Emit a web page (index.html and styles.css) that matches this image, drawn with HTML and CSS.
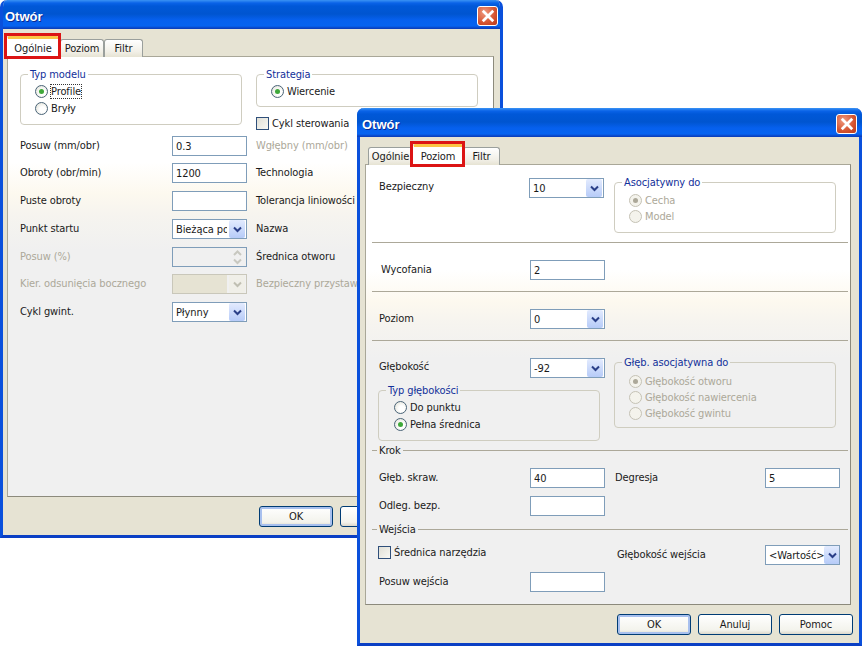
FILE: index.html
```html
<!DOCTYPE html>
<html lang="pl">
<head>
<meta charset="utf-8">
<title>Otwór</title>
<link rel="stylesheet" href="styles.css">
</head>
<body>
<section class="win win-a">
  <header class="title"><span class="title-text">Otwór</span><span class="close"><svg viewBox="0 0 12 12"><path d="M1.5 1.5 10.5 10.5M10.5 1.5 1.5 10.5"/></svg></span></header>
  <div class="tabs tabs-a">
    <span class="tab active marked w-og">Ogólnie</span>
    <span class="tab w-po">Poziom</span>
    <span class="tab w-fi">Filtr</span>
  </div>
  <div class="panel panel-a">
    <div class="top-a">
      <div class="group g-model">
        <span class="legend">Typ modelu</span>
        <label class="radio"><i class="dot on"></i><span class="focus">Profile</span></label>
        <label class="radio"><i class="dot"></i><span>Bryły</span></label>
      </div>
      <div class="top-right">
        <div class="group g-strat">
          <span class="legend">Strategia</span>
          <label class="radio"><i class="dot on"></i><span>Wiercenie</span></label>
        </div>
        <label class="check"><i class="box"></i><span>Cykl sterowania</span></label>
      </div>
    </div>
    <div class="form-a">
      <span class="lbl">Posuw (mm/obr)</span><div class="field"><span class="val">0.3</span></div><span class="lbl off">Wgłębny (mm/obr)</span>
      <span class="lbl">Obroty (obr/min)</span><div class="field"><span class="val">1200</span></div><span class="lbl">Technologia</span>
      <span class="lbl">Puste obroty</span><div class="field"></div><span class="lbl">Tolerancja liniowości</span>
      <span class="lbl">Punkt startu</span><div class="field combo"><span class="val clip">Bieżąca pozycja</span><span class="arrow"><svg viewBox="0 0 9 7"><path d="M1 1.5 4.5 5 8 1.5"/></svg></span></div><span class="lbl">Nazwa</span>
      <span class="lbl off">Posuw (%)</span><div class="field spin-field"><span class="spin"><svg viewBox="0 0 9 7"><path d="M1 5 4.5 1.5 8 5"/></svg><svg viewBox="0 0 9 7"><path d="M1 1.5 4.5 5 8 1.5"/></svg></span></div><span class="lbl">Średnica otworu</span>
      <span class="lbl off">Kier. odsunięcia bocznego</span><div class="field combo disabled"><span class="arrow"><svg viewBox="0 0 9 7"><path d="M1 1.5 4.5 5 8 1.5"/></svg></span></div><span class="lbl off">Bezpieczny przystaw</span>
      <span class="lbl">Cykl gwint.</span><div class="field combo"><span class="val">Płynny</span><span class="arrow"><svg viewBox="0 0 9 7"><path d="M1 1.5 4.5 5 8 1.5"/></svg></span></div>
    </div>
  </div>
  <footer class="actions actions-a">
    <span class="btn default">OK</span>
    <span class="btn"></span>
  </footer>
</section>

<section class="win win-b">
  <header class="title"><span class="title-text">Otwór</span><span class="close"><svg viewBox="0 0 12 12"><path d="M1.5 1.5 10.5 10.5M10.5 1.5 1.5 10.5"/></svg></span></header>
  <div class="tabs tabs-b">
    <span class="tab w-og2">Ogólnie</span>
    <span class="tab active marked w-po2">Poziom</span>
    <span class="tab w-fi2">Filtr</span>
  </div>
  <div class="panel panel-b">
    <div class="sec sec-1">
      <span class="lbl sec-lbl">Bezpieczny</span>
      <div class="field combo shift-0"><span class="val">10</span><span class="arrow"><svg viewBox="0 0 9 7"><path d="M1 1.5 4.5 5 8 1.5"/></svg></span></div>
      <div class="group g-asoc">
        <span class="legend">Asocjatywny do</span>
        <label class="radio off"><i class="dot on"></i><span>Cecha</span></label>
        <label class="radio off"><i class="dot"></i><span>Model</span></label>
      </div>
    </div>
    <div class="sec sec-2">
      <span class="lbl sec-lbl nudge">Wycofania</span>
      <div class="field"><span class="val">2</span></div>
    </div>
    <div class="sec sec-3">
      <span class="lbl sec-lbl">Poziom</span>
      <div class="field combo"><span class="val">0</span><span class="arrow"><svg viewBox="0 0 9 7"><path d="M1 1.5 4.5 5 8 1.5"/></svg></span></div>
    </div>
    <div class="sec sec-4">
      <div class="depth-left">
        <div class="depth-row">
          <span class="lbl sec-lbl">Głębokość</span>
          <div class="field combo"><span class="val">-92</span><span class="arrow"><svg viewBox="0 0 9 7"><path d="M1 1.5 4.5 5 8 1.5"/></svg></span></div>
        </div>
        <div class="group g-typ">
          <span class="legend">Typ głębokości</span>
          <label class="radio"><i class="dot"></i><span>Do punktu</span></label>
          <label class="radio"><i class="dot on"></i><span>Pełna średnica</span></label>
        </div>
      </div>
      <div class="group g-gleb">
        <span class="legend">Głęb. asocjatywna do</span>
        <label class="radio off"><i class="dot on"></i><span>Głębokość otworu</span></label>
        <label class="radio off"><i class="dot"></i><span>Głębokość nawiercenia</span></label>
        <label class="radio off"><i class="dot"></i><span>Głębokość gwintu</span></label>
      </div>
    </div>
    <div class="sep"><span>Krok</span></div>
    <div class="rows rows-krok">
      <span class="lbl">Głęb. skraw.</span><div class="field"><span class="val">40</span></div><span class="lbl">Degresja</span><div class="field"><span class="val">5</span></div>
      <span class="lbl">Odleg. bezp.</span><div class="field"></div>
    </div>
    <div class="sep sep-w"><span>Wejścia</span></div>
    <div class="rows rows-wej">
      <label class="check"><i class="box"></i><span>Średnica narzędzia</span></label><span></span><span class="lbl">Głębokość wejścia</span><div class="field combo"><span class="val tight">&lt;Wartość&gt;</span><span class="arrow"><svg viewBox="0 0 9 7"><path d="M1 1.5 4.5 5 8 1.5"/></svg></span></div>
      <span class="lbl">Posuw wejścia</span><div class="field"></div>
    </div>
  </div>
  <footer class="actions actions-b">
    <span class="btn default">OK</span>
    <span class="btn">Anuluj</span>
    <span class="btn">Pomoc</span>
  </footer>
</section>
</body>
</html>
```

FILE: styles.css
```css
* { box-sizing: border-box; }
html, body { margin: 0; padding: 0; background: #fff; }
body { width: 863px; height: 648px; position: relative; overflow: hidden; font: 11px "DejaVu Sans Condensed", "DejaVu Sans", sans-serif; font-stretch: condensed; letter-spacing: -0.1px; color: #1a1a1a; }

.win { position: absolute; height: 538px; background: #e6e3d3; border: 3px solid #0a50dc; border-top: 0; border-bottom-color: #0a3fc4; border-radius: 7px 7px 0 0; display: flex; flex-direction: column; }
.win-a { left: 0; top: 0; width: 503px; z-index: 1; overflow: hidden; }
.win-b { left: 357px; top: 108px; width: 505px; z-index: 2; }

.title { flex: none; height: 29px; margin: 0 -3px; padding: 0 5px; display: flex; align-items: center; justify-content: space-between; border-radius: 7px 7px 0 0;
  background: linear-gradient(#3a93f4 0, #0a63e8 3px, #0058d8 6px, #0055d0 14px, #0660ee 20px, #0663f0 26px, #0a44c4 28px, #0a3cb8 29px); }
.title-text { font: bold 13px "Liberation Sans", Arial, sans-serif; letter-spacing: 0; color: #fff; text-shadow: 1px 1px 0 #0a2a90; padding-top: 3px; }
.close { width: 21px; height: 20px; margin-top: 2px; border: 1px solid #fff; border-radius: 3px; background: radial-gradient(circle at 35% 30%, #f09a80, #d4532f 60%, #b83a1c); display: flex; align-items: center; justify-content: center; }
.close svg { width: 14px; height: 14px; }
.close path { fill: none; stroke: #fff; stroke-width: 2.4; }

.tabs { position: relative; z-index: 1; flex: none; display: flex; align-items: flex-end; height: 28px; margin-bottom: -1px; }
.tabs-a { padding-left: 4px; }
.tabs-b { padding-left: 8px; }
.tab { height: 18px; padding-top: 2px; text-align: center; border: 1px solid #9a9f9c; border-bottom: 0; border-radius: 3px 3px 0 0; background: linear-gradient(#fff, #f1efe6 70%, #e6e3d3); }
.tab.active { height: 21px; padding-top: 3px; background: #fff; border-top: 3px solid #fbc545; position: relative; border-left-color: #fff; border-right-color: #fff; }
.tab.marked::after { content: ""; position: absolute; left: -4px; right: -3px; top: -6px; bottom: -2px; border: 3px solid #dc1414; }
.w-og { width: 52px; }
.w-po { width: 44px; margin-left: 1px; }
.w-fi { width: 39px; }
.w-og2 { width: 45px; }
.w-po2 { width: 50px; }
.w-fi2 { width: 37px; }

.panel { flex: none; height: 441px; border: 1px solid #a9a798; border-right-color: #8c8a7c; border-bottom-color: #8c8a7c; background: linear-gradient(#fff 0, #fff 24%, #fdf9ef 31%, #f6f4ef 36%, #f0f0f0 44%, #f0f0f0 100%); }
.panel-a { margin: 0 6px 0 4px; width: 487px; padding: 17px 0 0 12px; overflow: hidden; }
.panel-b { margin: 0 8px 0 5px; width: 486px; padding-right: 1px; }

.lbl { white-space: nowrap; align-self: center; line-height: 13px; }
.off, .off span { color: #aca899; }

.group { position: relative; border: 1px solid #cfcdc0; border-radius: 4px; }
.legend { position: absolute; left: 7px; top: -7px; padding: 0 2px; line-height: 13px; color: #12309a; background: inherit; white-space: nowrap; }
.g-model .legend, .g-strat .legend { background: #fff; }
.g-asoc .legend { background: #fff; }
.g-typ .legend, .g-gleb .legend { background: #f0f0f0; }

.radio, .check { display: flex; align-items: center; height: 17px; white-space: nowrap; }
.dot { flex: none; width: 13px; height: 13px; margin-right: 3px; border: 1px solid #4a6478; border-radius: 50%; background: radial-gradient(circle at 60% 60%, #fff 30%, #dcdcd0 100%); position: relative; }
.dot.on::after { content: ""; position: absolute; left: 3px; top: 3px; width: 5px; height: 5px; border-radius: 50%; background: #3fa83a; }
.radio.off .dot { border-color: #c5c2b5; background: #f4f3ec; }
.radio.off .dot.on::after { background: #aca899; }
.focus { outline: 1px dotted #333; outline-offset: 0; }
.box { flex: none; width: 13px; height: 13px; margin-right: 3px; border: 1px solid #2f4f7a; background: linear-gradient(135deg, #e0dfd6, #f8f8f4); }

.field { width: 75px; height: 20px; background: #fff; border: 1px solid #7f9db9; display: flex; align-items: center; justify-content: space-between; padding-left: 3px; overflow: hidden; }
.val { font-size: 11px; white-space: nowrap; }
.val.clip { width: 51px; overflow: hidden; }
.combo { padding-right: 1px; }
.arrow { flex: none; width: 16px; height: 18px; border-radius: 2px; background: linear-gradient(#e3ebfe, #b6cbf8); display: flex; align-items: center; justify-content: center; }
.arrow svg, .spin svg { width: 9px; height: 7px; }
.arrow path { fill: none; stroke: #2a3f88; stroke-width: 2; }
.combo.disabled { border-color: #c9c7ba; background: #f0f0f0; padding-left: 0; justify-content: flex-end; }
.combo.disabled .arrow { background: #f0efe8; }
.combo.disabled .arrow path { stroke: #c0bfb2; }
.combo.disabled::before { content: ""; width: 54px; height: 18px; margin-right: auto; background: #e6e3d3; }
.spin-field { background: #f0f0f0; justify-content: flex-end; padding: 0 1px; }
.spin { width: 16px; height: 18px; display: flex; flex-direction: column; align-items: center; justify-content: center; gap: 1px; }
.spin path { fill: none; stroke: #c8c8c0; stroke-width: 2; }

.top-a { display: flex; height: 62px; }
.g-model { width: 222px; height: 51px; padding: 8px 0 0 14px; }
.top-right { width: 222px; margin-left: 14px; }
.g-strat { height: 33px; padding: 8px 0 0 14px; }
.top-right .check { margin-top: 8px; }
.form-a { display: grid; grid-template-columns: 152px 84px auto; grid-template-rows: 27px 28px 28px 28px 27px 28px 21px; align-items: start; }
.form-a .lbl { align-self: start; padding-top: 3px; }

.actions { display: flex; gap: 7px; }
.actions-a { padding: 9px 0 0 256px; }
.actions-b { padding: 9px 0 0 257px; }
.btn { width: 74px; height: 21px; line-height: 19px; text-align: center; border: 1px solid #003c74; border-radius: 3px; background: linear-gradient(#fff, #f3f3ec 80%, #dcd8cc); }
.btn.default { box-shadow: inset 0 0 0 2px #a8c0ee; }

.sec { margin: 0 1px 0 6px; border-bottom: 1px solid #aca899; position: relative; display: flex; align-items: flex-start; }
.sec-lbl { width: 157px; padding-left: 7px; align-self: flex-start; padding-top: 3px; flex: none; }
.sec-lbl.nudge { padding-left: 9px; width: 158px; padding-top: 3px; }
.sec-1 { height: 78px; padding-top: 13px; }
.sec-1 .lbl { width: 157px; padding-top: 2px; }
.g-asoc { width: 222px; height: 51px; margin: 4px 0 0 10px; padding: 9px 0 0 14px; }
.g-asoc .radio { height: 16px; }
.sec-2, .sec-3 { height: 49px; padding-top: 17px; }
.sec-2 .sec-lbl { width: 158px; }
.sec-3 .sec-lbl { width: 158px; }
.sec-4 { height: 103px; border-bottom: 0; padding-top: 17px; }
.depth-left { width: 233px; flex: none; }
.depth-row { display: flex; }
.depth-row .sec-lbl { width: 158px; padding-top: 2px; }
.g-typ { width: 222px; height: 51px; margin: 12px 0 0 6px; padding: 8px 0 0 15px; }
.g-gleb { width: 222px; height: 66px; margin: 4px 0 0 9px; padding: 10px 0 0 14px; }
.g-gleb .radio { height: 16px; }

.sep { margin: 0 1px 0 6px; height: 13px; display: flex; align-items: center; gap: 2px; line-height: 13px; }
.sep::before { content: ""; width: 5px; height: 1px; background: #aca899; }
.sep::after { content: ""; flex: 1; height: 1px; background: #aca899; }
.rows { margin-left: 13px; display: grid; grid-template-columns: 151px 75px 160px 75px; align-items: start; }
.rows .lbl { align-self: start; padding-top: 3px; }
.rows-krok { padding-top: 11px; grid-template-rows: 28px 20px; height: 66px; }
.rows-krok .lbl:nth-child(3) { padding-left: 10px; }
.rows-wej { padding-top: 9px; grid-template-rows: 27px 20px; }
.rows-wej .check { margin-top: -1px; margin-left: -1px; }
.rows-wej > .lbl:nth-child(3) { padding-left: 12px; }
```
